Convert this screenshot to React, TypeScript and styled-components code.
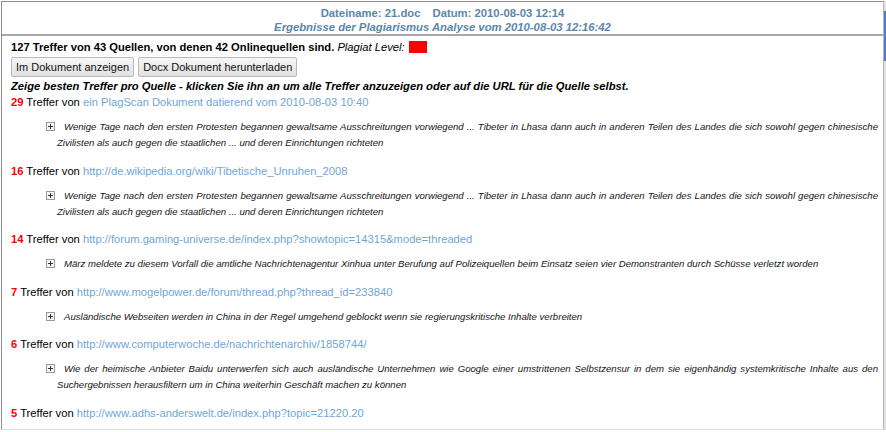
import React from 'react';
import styled, { createGlobalStyle } from 'styled-components';

const GlobalStyle = createGlobalStyle`
  html, body {
    margin: 0;
    padding: 0;
    background: #ffffff;
  }
  body {
    font-family: "Liberation Sans", Arial, Helvetica, sans-serif;
    color: #000;
  }
`;

type Hit = {
  count: number;
  source: string;
  snippet: string;
};

const hits: Hit[] = [
  {
    count: 29,
    source: 'ein PlagScan Dokument datierend vom 2010-08-03 10:40',
    snippet:
      'Wenige Tage nach den ersten Protesten begannen gewaltsame Ausschreitungen vorwiegend ... Tibeter in Lhasa dann auch in anderen Teilen des Landes die sich sowohl gegen chinesische Zivilisten als auch gegen die staatlichen ... und deren Einrichtungen richteten',
  },
  {
    count: 16,
    source: 'http://de.wikipedia.org/wiki/Tibetische_Unruhen_2008',
    snippet:
      'Wenige Tage nach den ersten Protesten begannen gewaltsame Ausschreitungen vorwiegend ... Tibeter in Lhasa dann auch in anderen Teilen des Landes die sich sowohl gegen chinesische Zivilisten als auch gegen die staatlichen ... und deren Einrichtungen richteten',
  },
  {
    count: 14,
    source: 'http://forum.gaming-universe.de/index.php?showtopic=14315&mode=threaded',
    snippet:
      'März meldete zu diesem Vorfall die amtliche Nachrichtenagentur Xinhua unter Berufung auf Polizeiquellen beim Einsatz seien vier Demonstranten durch Schüsse verletzt worden',
  },
  {
    count: 7,
    source: 'http://www.mogelpower.de/forum/thread.php?thread_id=233840',
    snippet:
      'Ausländische Webseiten werden in China in der Regel umgehend geblockt wenn sie regierungskritische Inhalte verbreiten',
  },
  {
    count: 6,
    source: 'http://www.computerwoche.de/nachrichtenarchiv/1858744/',
    snippet:
      'Wie der heimische Anbieter Baidu unterwerfen sich auch ausländische Unternehmen wie Google einer umstrittenen Selbstzensur in dem sie eigenhändig systemkritische Inhalte aus den Suchergebnissen herausfiltern um in China weiterhin Geschäft machen zu können',
  },
  {
    count: 5,
    source: 'http://www.adhs-anderswelt.de/index.php?topic=21220.20',
    snippet: '',
  },
];

const Page = styled.div`
  display: flex;
  padding: 1px 0 0 1px;
  height: 432px;
  box-sizing: border-box;
  overflow: hidden;
`;

const Frame = styled.div`
  width: 883px;
  height: 429px;
  box-sizing: border-box;
  border-top: 1px solid #8e8e8e;
  border-left: 1px solid #8e8e8e;
  border-right: 1px solid #b8b8b8;
  border-bottom: 1px solid #dedede;
  overflow: hidden;
`;

const ScrollTrack = styled.div`
  width: 2px;
  height: 429px;
  background: #e2e2e2;
  display: flex;
  flex-direction: column;
`;

const ScrollThumb = styled.div`
  margin-top: 10px;
  height: 50px;
  background: #4a7fc4;
`;

const Header = styled.div`
  padding-top: 4px;
  text-align: center;
  color: #5a86ab;
  font-weight: bold;
  font-size: 11.3px;
  line-height: 14px;
  border-bottom: 2px solid #a9a9a9;
`;

const HeaderLine = styled.div<{ $italic?: boolean }>`
  font-style: ${(p) => (p.$italic ? 'italic' : 'normal')};
`;

const HeaderField = styled.span`
  & + & {
    margin-left: 12px;
  }
`;

const Body = styled.div`
  padding: 3px 5px 0 9px;
  font-size: 11.2px;
  line-height: 16px;
`;

const Summary = styled.div`
  font-weight: bold;
  display: flex;
  align-items: center;
  white-space: pre;
`;

const LevelLabel = styled.span`
  font-weight: normal;
  font-style: italic;
`;

const LevelBox = styled.span<{ $color: string }>`
  display: inline-block;
  width: 18px;
  height: 12px;
  margin-left: 4px;
  background: ${(p) => p.$color};
`;

const ButtonRow = styled.div`
  display: flex;
  gap: 4px;
  margin-top: 2px;
`;

const Button = styled.button`
  height: 20px;
  padding: 0 4px;
  font-family: "Liberation Sans", Arial, sans-serif;
  font-size: 11px;
  color: #111;
  background: linear-gradient(#f7f7f7, #e1e1e1);
  border: 1px solid #b9b9b9;
  border-radius: 2px;
`;

const Hint = styled.div`
  margin-top: 1px;
  font-weight: bold;
  font-style: italic;
`;

const Entry = styled.div``;

const EntryHead = styled.div``;

const Count = styled.span`
  color: #ff0000;
  font-weight: bold;
`;

const SourceLink = styled.a`
  color: #6fa6d9;
  text-decoration: none;
`;

const Snippet = styled.div`
  margin: 9px 0 11.5px;
  padding-left: 46px;
  text-indent: -11px;
  font-size: 9.6px;
  line-height: 16px;
  font-style: italic;
  color: #141414;
  text-align: justify;
`;

const Toggle = styled.svg`
  width: 9px;
  height: 9px;
  margin-right: 9px;
  vertical-align: -1px;
`;

const PlusIcon = () => (
  <Toggle viewBox="0 0 9 9">
    <rect x="0.5" y="0.5" width="8" height="8" fill="#f6f6f6" stroke="#9a9a9a" />
    <path d="M2 4.5h5M4.5 2v5" stroke="#333" strokeWidth="1" />
  </Toggle>
);

export default function App() {
  return (
    <>
      <GlobalStyle />
      <Page>
        <Frame>
          <Header>
            <HeaderLine>
              <HeaderField>Dateiname: 21.doc</HeaderField>
              <HeaderField>Datum: 2010-08-03 12:14</HeaderField>
            </HeaderLine>
            <HeaderLine $italic>Ergebnisse der Plagiarismus Analyse vom 2010-08-03 12:16:42</HeaderLine>
          </Header>
          <Body>
            <Summary>
              127 Treffer von 43 Quellen, von denen 42 Onlinequellen sind. <LevelLabel>Plagiat Level:</LevelLabel>
              <LevelBox $color="#ff0000" />
            </Summary>
            <ButtonRow>
              <Button>Im Dokument anzeigen</Button>
              <Button>Docx Dokument herunterladen</Button>
            </ButtonRow>
            <Hint>
              Zeige besten Treffer pro Quelle - klicken Sie ihn an um alle Treffer anzuzeigen oder auf die URL für die Quelle selbst.
            </Hint>
            {hits.map((hit) => (
              <Entry key={hit.count}>
                <EntryHead>
                  <Count>{hit.count}</Count> Treffer von <SourceLink href="#">{hit.source}</SourceLink>
                </EntryHead>
                {hit.snippet && (
                  <Snippet>
                    <PlusIcon />
                    {hit.snippet}
                  </Snippet>
                )}
              </Entry>
            ))}
          </Body>
        </Frame>
        <ScrollTrack>
          <ScrollThumb />
        </ScrollTrack>
      </Page>
    </>
  );
}
